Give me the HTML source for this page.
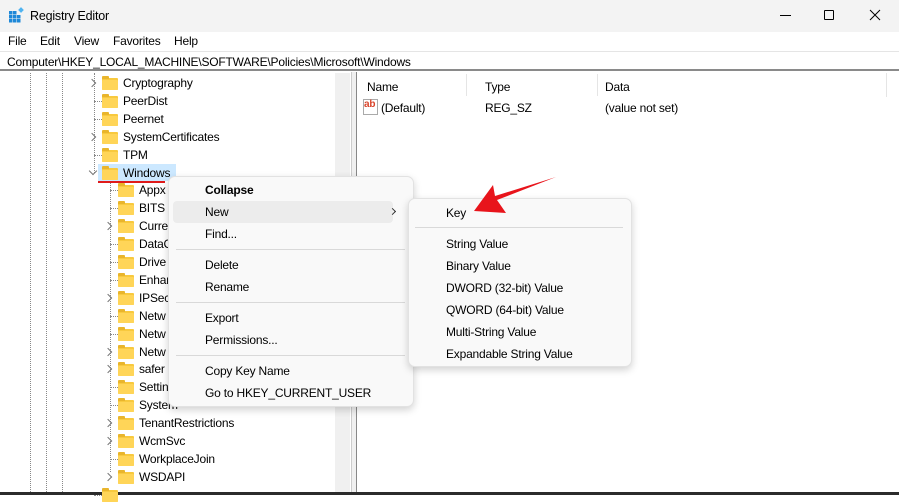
<!DOCTYPE html>
<html><head><style>
*{margin:0;padding:0;box-sizing:border-box}
body{width:899px;height:495px;overflow:hidden;background:#fff;font-family:"Liberation Sans",sans-serif;font-size:12px;letter-spacing:-0.2px;color:#000;position:relative}
.a{position:absolute;white-space:nowrap}
.f{position:absolute;width:16px;height:12px;background:#f8c93e;border-radius:1px}
.f:before{content:"";position:absolute;left:0;top:-2px;width:7px;height:3px;background:#e9b52c;border-radius:1px 1px 0 0}
.f:after{content:"";position:absolute;left:0;top:2px;width:16px;height:10px;background:#ffd558;border-radius:1px}
.ch{position:absolute;width:6px;height:6px;border-right:1.5px solid #777;border-top:1.5px solid #777;transform:rotate(45deg)}
.vd{position:absolute;width:0;border-left:1px dotted #888}
.hd{position:absolute;height:0;border-top:1px dotted #888;width:8px}
.m{position:absolute;background:#f9f9f9;border:1px solid #e2e2e2;border-radius:7px;box-shadow:0 3px 8px rgba(0,0,0,.18)}
.sep{position:absolute;height:1px;background:#d9d9d9}
</style></head><body>
<div class="a" style="left:0;top:0;width:899px;height:32px;background:#f3f3f3"></div>
<svg class="a" style="left:8px;top:7px" width="17" height="17" viewBox="0 0 17 17">
<g fill="#1e88d8"><rect x="1" y="4" width="3.5" height="3.5"/><rect x="5" y="4" width="3.5" height="3.5"/><rect x="1" y="8" width="3.5" height="3.5"/><rect x="5" y="8" width="3.5" height="3.5"/><rect x="9" y="8" width="3.5" height="3.5"/><rect x="1" y="12" width="3.5" height="3.5"/><rect x="5" y="12" width="3.5" height="3.5"/><rect x="9" y="12" width="3.5" height="3.5"/><rect x="11" y="1" width="4" height="4" transform="rotate(45 13 3)" fill="#4fb3f0"/></g></svg>
<div class="a" style="left:30px;top:9px;font-size:12.5px">Registry Editor</div>
<div class="a" style="left:780px;top:15px;width:11px;height:1px;background:#000"></div>
<div class="a" style="left:824px;top:10px;width:10px;height:10px;border:1px solid #000;border-radius:1px"></div>
<svg class="a" style="left:869px;top:9px" width="12" height="12"><path d="M1 1L11 11M11 1L1 11" stroke="#000" stroke-width="1"/></svg>
<div class="a" style="left:8px;top:34px">File</div>
<div class="a" style="left:40px;top:34px">Edit</div>
<div class="a" style="left:74px;top:34px">View</div>
<div class="a" style="left:113px;top:34px">Favorites</div>
<div class="a" style="left:174px;top:34px">Help</div>
<div class="a" style="left:0;top:51px;width:899px;height:20px;border-top:1px solid #e5e5e5;border-bottom:2px solid #8a8a8a"></div>
<div class="a" style="left:7px;top:55px">Computer\HKEY_LOCAL_MACHINE\SOFTWARE\Policies\Microsoft\Windows</div>
<div class="a" style="left:335px;top:73px;width:15px;height:419px;background:#f0f0f0"></div>
<div class="a" style="left:351px;top:72px;width:6px;height:420px;background:#f0f0f0;border-left:1px solid #ccc;border-right:1px solid #888"></div>
<div class="a" style="left:0;top:492px;width:899px;height:3px;background:#2b2b2b"></div>
<div class="a" style="left:886px;top:73px;width:1px;height:24px;background:#e5e5e5"></div>
<div class="vd" style="left:30px;top:73px;height:419px"></div>
<div class="vd" style="left:46px;top:73px;height:419px"></div>
<div class="vd" style="left:62px;top:73px;height:419px"></div>
<div class="vd" style="left:94px;top:73px;height:100px"></div>
<div class="vd" style="left:110px;top:180px;height:292px"></div>
<div class="a" style="left:367px;top:80px">Name</div>
<div class="a" style="left:466px;top:74px;width:1px;height:22px;background:#e5e5e5"></div>
<div class="a" style="left:485px;top:80px">Type</div>
<div class="a" style="left:597px;top:74px;width:1px;height:22px;background:#e5e5e5"></div>
<div class="a" style="left:605px;top:80px">Data</div>
<div class="a" style="left:363px;top:99px;width:15px;height:16px;border:1px solid #aaa;background:#fff"></div>
<div class="a" style="left:364px;top:99px;color:#d9442b;font-weight:bold;font-size:10px">ab</div>
<div class="a" style="left:381px;top:101px">(Default)</div>
<div class="a" style="left:485px;top:101px">REG_SZ</div>
<div class="a" style="left:605px;top:101px">(value not set)</div>
<div class="a" style="left:98px;top:164px;width:78px;height:17px;background:#cce8ff"></div>
<div class="a" style="left:98px;top:181px;width:67px;height:2px;background:#e01b1b"></div>
<div id="tree"></div>
<script>
var rows=[["Cryptography",1,1],["PeerDist",1,0],["Peernet",1,0],["SystemCertificates",1,1],["TPM",1,0],["Windows",1,2],
["Appx",2,0],["BITS",2,0],["Curre",2,1],["DataC",2,0],["Drive",2,0],["Enhar",2,0],["IPSec",2,1],["Netw",2,0],["Netw",2,0],["Netw",2,1],["safer",2,1],["Settin",2,0],["System",2,0],["TenantRestrictions",2,1],["WcmSvc",2,1],["WorkplaceJoin",2,0],["WSDAPI",2,1],["",1,0]];
var h="";rows.forEach(function(r,i){var y=83+i*17.9;var fx=r[1]==1?102:118;var cx=r[1]==1?89:105;
if(r[2]==1)h+='<div class="ch" style="left:'+(cx)+'px;top:'+Math.round(y-3)+'px"></div>';
else if(r[2]==2)h+='<div class="ch" style="left:'+(cx+1)+'px;top:'+Math.round(y-5)+'px;transform:rotate(135deg)"></div>';
else h+='<div class="hd" style="left:'+(cx+5)+'px;top:'+Math.round(y)+'px"></div>';
h+='<div class="f" style="left:'+fx+'px;top:'+Math.round(y-5)+'px"></div>';
h+='<div class="a" style="left:'+(fx+21)+'px;top:'+Math.round(y-7)+'px">'+r[0]+'</div>';});
document.getElementById('tree').innerHTML=h;
</script>
<div class="m" style="left:168px;top:176px;width:246px;height:231px"></div>
<div class="a" style="left:173px;top:201px;width:220px;height:22px;background:#ececec;border-radius:4px"></div>
<div class="a" style="left:205px;top:183px;font-weight:bold">Collapse</div>
<div class="a" style="left:205px;top:205px">New</div>
<div class="ch" style="left:390px;top:209px;width:5px;height:5px;border-color:#333;border-width:1.2px"></div>
<div class="a" style="left:205px;top:227px">Find...</div>
<div class="sep" style="left:176px;top:249px;width:229px"></div>
<div class="a" style="left:205px;top:258px">Delete</div>
<div class="a" style="left:205px;top:280px">Rename</div>
<div class="sep" style="left:176px;top:302px;width:229px"></div>
<div class="a" style="left:205px;top:311px">Export</div>
<div class="a" style="left:205px;top:333px">Permissions...</div>
<div class="sep" style="left:176px;top:355px;width:229px"></div>
<div class="a" style="left:205px;top:364px">Copy Key Name</div>
<div class="a" style="left:205px;top:386px">Go to HKEY_CURRENT_USER</div>
<div class="m" style="left:408px;top:198px;width:224px;height:169px"></div>
<div class="a" style="left:446px;top:206px">Key</div>
<div class="sep" style="left:415px;top:227px;width:208px"></div>
<div class="a" style="left:446px;top:237px">String Value</div>
<div class="a" style="left:446px;top:259px">Binary Value</div>
<div class="a" style="left:446px;top:281px">DWORD (32-bit) Value</div>
<div class="a" style="left:446px;top:303px">QWORD (64-bit) Value</div>
<div class="a" style="left:446px;top:325px">Multi-String Value</div>
<div class="a" style="left:446px;top:347px">Expandable String Value</div>
<svg class="a" style="left:460px;top:170px" width="110" height="50"><path d="M14 41L33 15L35 26L96 7L37 30L46 43Z" fill="#e8141b"/></svg>
</body></html>
